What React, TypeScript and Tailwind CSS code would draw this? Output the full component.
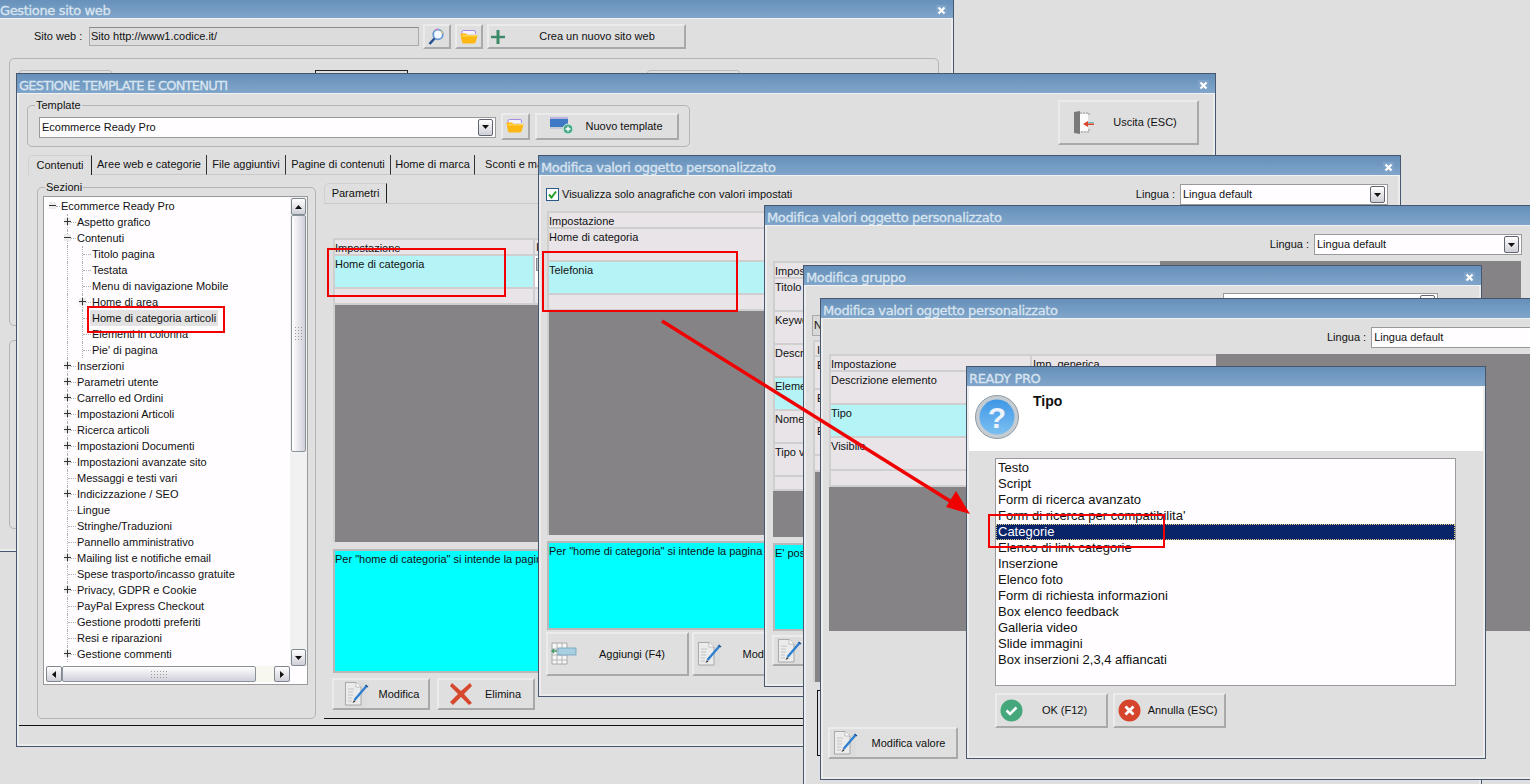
import React from "react";

const FONT = "font-['Liberation_Sans',sans-serif]";

function CloseX() {
  return (
    <svg width="11" height="11" viewBox="0 0 11 11" className="shrink-0">
      <rect width="11" height="11" fill="#7fa3c8" />
      <path d="M2.5 2.5L8.5 8.5M8.5 2.5L2.5 8.5" stroke="#fff" strokeWidth="2.2" />
    </svg>
  );
}

function Win({ className, title, close, children, titleClass }: { className: string; title: string; close?: boolean; children?: React.ReactNode; titleClass?: string }) {
  return (
    <div className={"absolute flex flex-col border border-[#47586e] bg-[#dfdfdf] overflow-hidden " + className}>
      <div className="h-5 shrink-0 flex items-center justify-between bg-gradient-to-b from-[#6690ba] to-[#80a5ca] pl-[2px] pr-[6px] pt-[3px] border-b border-[#f2f2f2]">
        <span className={"text-[#d9e5f0] text-[13px] leading-none whitespace-nowrap font-['DejaVu_Sans',sans-serif] [-webkit-text-stroke:0.3px_#d9e5f0] " + (titleClass || "tracking-[-0.35px]")}>{title}</span>
        {close && <CloseX />}
      </div>
      <div className="flex-1 flex flex-col border-x-2 border-b-2 border-[#ececec] min-h-0">{children}</div>
    </div>
  );
}

function ComboArrow() {
  return (
    <div className="w-[15px] h-[17px] rounded-[2px] border border-[#5f6670] bg-gradient-to-b from-[#ffffff] to-[#cfcfd6] flex items-center justify-center shrink-0">
      <svg width="7" height="4" viewBox="0 0 7 4"><path d="M0 0H7L3.5 4Z" fill="#111" /></svg>
    </div>
  );
}

function Combo({ className, text }: { className: string; text: string }) {
  return (
    <div className={"h-[21px] shrink-0 border border-[#9a9a9a] bg-[#fffdff] flex items-center justify-between pl-[2px] pr-[2px] " + className}>
      <span>{text}</span>
      <ComboArrow />
    </div>
  );
}

function Btn({ className, icon, label, labelClass }: { className: string; icon?: React.ReactNode; label?: string; labelClass?: string }) {
  return (
    <div className={"flex shrink-0 items-center border-2 border-t-[#ebebeb] border-l-[#ebebeb] border-r-[#a9a9a9] border-b-[#a9a9a9] bg-[#dfdfdf] " + className}>
      {icon && <span className="shrink-0 flex items-center">{icon}</span>}
      {label && <span className={"flex-1 text-center whitespace-nowrap " + (labelClass || "")}>{label}</span>}
    </div>
  );
}

function Folder() {
  return (
    <svg width="18" height="14" viewBox="0 0 18 14">
      <path d="M2 4V2Q2 .5 3.500 .5H14Q15.500 .5 15.500 2V4" fill="#f6f2fb" stroke="#a58be0" strokeWidth="1" />
      <path d="M.5 4.500Q.5 3.500 1.500 3.500H6L7.500 5H16.500Q17.500 5 17.500 6L15.500 12.500Q15 13.500 14 13.500H3.500Q2.500 13.500 2 12.500Z" fill="#fdb813" />
      <path d="M1.500 5H17V6.500H2Z" fill="#ffd34d" />
    </svg>
  );
}
function Magnifier() {
  return (
    <svg width="16" height="18" viewBox="0 0 16 18">
      <circle cx="10" cy="6.500" r="4.800" fill="#f4f9ff" stroke="#6b9ad0" strokeWidth="1.800" />
      <path d="M7 1.700a5 5 0 0 1 3-.5" stroke="#d889c8" strokeWidth="1.200" fill="none" />
      <path d="M13 3a5 5 0 0 1 1.500 2.500" stroke="#e2c060" strokeWidth="1.200" fill="none" />
      <path d="M6.500 10.500L1.500 16" stroke="#27508f" strokeWidth="2.600" />
    </svg>
  );
}
function PlusGreen() {
  return (
    <svg width="16" height="16" viewBox="0 0 16 16">
      <path d="M8 1V15" stroke="#3d8a68" strokeWidth="3" />
      <path d="M1 8H15" stroke="#3d8a68" strokeWidth="2.400" />
    </svg>
  );
}
function NewTemplate() {
  return (
    <svg width="24" height="18" viewBox="0 0 24 18">
      <rect x="0" y="0" width="18" height="10" fill="#3f78c4" />
      <rect x="0" y="0" width="18" height="2" fill="#b9b3e0" />
      <rect x="0" y="10" width="18" height="2" fill="#c5cad2" />
      <circle cx="18" cy="12" r="5" fill="#4aa98a" stroke="#d8efe6" />
      <path d="M18 9.500V14.500M15.500 12H20.500" stroke="#fff" strokeWidth="1.400" />
    </svg>
  );
}
function ExitDoor() {
  return (
    <svg width="24" height="24" viewBox="0 0 24 24">
      <path d="M1 1L7 0V23L1 22Z" fill="#7a7a7a" />
      <path d="M7 2H16V5M16 18V21H7" fill="none" stroke="#9a9a9a" strokeWidth="1" strokeDasharray="2 1" />
      <rect x="7" y="3" width="8" height="17" fill="#fbfbfb" />
      <path d="M21 12.500H15V10L10 13L15 16V14H21Z" fill="#d8432b" />
      <path d="M15 11.500H21" stroke="#63c4c8" strokeWidth="1" />
    </svg>
  );
}
function DocPencil() {
  return (
    <svg width="26" height="26" viewBox="0 0 26 26">
      <rect x="0" y="0" width="23" height="26" fill="#dcdcdc" />
      <path d="M1.500 1.500H12L17 6V24H1.500Z" fill="#ebebeb" stroke="#9a9a9a" strokeWidth=".8" />
      <path d="M12 1.500V6H17" fill="#fff" stroke="#9a9a9a" strokeWidth=".6" />
      <path d="M4 8H10M4 11H9M4 14H9M4 17H8M4 20H8" stroke="#c4c4c4" strokeWidth="1" />
      <path d="M22.500 5L10.500 19" stroke="#2f7fd0" strokeWidth="2.400" />
      <path d="M10 19L8.500 22L11.500 20.500Z" fill="#333" />
      <path d="M21.500 4L24 6" stroke="#1f4f90" strokeWidth="1.500" />
    </svg>
  );
}
function TableAdd() {
  return (
    <svg width="26" height="24" viewBox="0 0 26 24">
      <path d="M1 1H16V22H1Z" fill="#f6f6f6" stroke="#9a9a9a" strokeWidth=".8" />
      <path d="M1 7H16M1 13H16M1 18H16M6 1V22M11 1V22" stroke="#a8a8a8" strokeWidth=".8" />
      <rect x="7" y="6" width="18" height="7" fill="#a9cfe2" stroke="#6fa0bb" strokeWidth=".8" />
      <path d="M1 9H6M3 7L1 9L3 11" stroke="#3f9b68" strokeWidth="1.400" fill="none" />
    </svg>
  );
}
function CircleIcon({ color, kind }: { color: string; kind: "ok" | "x" }) {
  return (
    <svg width="23" height="23" viewBox="0 0 23 23">
      <circle cx="11.500" cy="11.500" r="11" fill={color} />
      {kind === "ok" ? (
        <path d="M6.500 11.500L10 15L16.500 8.500" stroke="#fff" strokeWidth="2.600" fill="none" />
      ) : (
        <path d="M7.500 7.500L15.500 15.500M15.500 7.500L7.500 15.500" stroke="#fff" strokeWidth="2.800" />
      )}
    </svg>
  );
}
function BigX() {
  return (
    <svg width="24" height="24" viewBox="0 0 24 24">
      <path d="M3 1L12 9L21 1L23 4L15 12L23 21L20 23L12 15L4 23L1 20L9 12L1 4Z" fill="#d6492f" />
    </svg>
  );
}
function Question() {
  return (
    <svg width="44" height="44" viewBox="0 0 44 44" className="shrink-0">
      <defs>
        <linearGradient id="qb" x1="0" y1="0" x2="0" y2="1">
          <stop offset="0" stopColor="#3f97e6" />
          <stop offset="1" stopColor="#7cc0f2" />
        </linearGradient>
      </defs>
      <circle cx="22" cy="22" r="21.500" fill="#c5cdd3" stroke="#8f9aa3" />
      <circle cx="22" cy="22" r="17.500" fill="url(#qb)" />
      <text x="22" y="33" textAnchor="middle" fontSize="30" fontWeight="700" fill="#eef3fb" fontFamily="Liberation Sans, sans-serif">?</text>
    </svg>
  );
}

function RedRect({ className }: { className: string }) {
  return <div className={"absolute border-2 border-[#f20000] z-50 " + className} />;
}

function Expander({ minus }: { minus?: boolean }) {
  return (
    <span className="relative inline-block w-[7px] h-[7px] bg-[#ececec]">
      <span className="absolute left-0 right-0 top-[3px] h-px bg-[#333]" />
      {!minus && <span className="absolute top-0 bottom-0 left-[3px] w-px bg-[#333]" />}
    </span>
  );
}

type Row = { t: string; lvl: number; exp?: "p" | "m"; hl?: boolean };
const TREE: Row[] = [
  { t: "Ecommerce Ready Pro", lvl: 0, exp: "m" },
  { t: "Aspetto grafico", lvl: 1, exp: "p" },
  { t: "Contenuti", lvl: 1, exp: "m" },
  { t: "Titolo pagina", lvl: 2 },
  { t: "Testata", lvl: 2 },
  { t: "Menu di navigazione Mobile", lvl: 2 },
  { t: "Home di area", lvl: 2, exp: "p" },
  { t: "Home di categoria articoli", lvl: 2, hl: true },
  { t: "Elementi in colonna", lvl: 2 },
  { t: "Pie' di pagina", lvl: 2 },
  { t: "Inserzioni", lvl: 1, exp: "p" },
  { t: "Parametri utente", lvl: 1, exp: "p" },
  { t: "Carrello ed Ordini", lvl: 1, exp: "p" },
  { t: "Impostazioni Articoli", lvl: 1, exp: "p" },
  { t: "Ricerca articoli", lvl: 1, exp: "p" },
  { t: "Impostazioni Documenti", lvl: 1, exp: "p" },
  { t: "Impostazioni avanzate sito", lvl: 1, exp: "p" },
  { t: "Messaggi e testi vari", lvl: 1 },
  { t: "Indicizzazione / SEO", lvl: 1, exp: "p" },
  { t: "Lingue", lvl: 1 },
  { t: "Stringhe/Traduzioni", lvl: 1 },
  { t: "Pannello amministrativo", lvl: 1 },
  { t: "Mailing list e notifiche email", lvl: 1, exp: "p" },
  { t: "Spese trasporto/incasso gratuite", lvl: 1 },
  { t: "Privacy, GDPR e Cookie", lvl: 1, exp: "p" },
  { t: "PayPal Express Checkout", lvl: 1 },
  { t: "Gestione prodotti preferiti", lvl: 1 },
  { t: "Resi e riparazioni", lvl: 1 },
  { t: "Gestione commenti", lvl: 1, exp: "p" },
];

function TreeRow({ r }: { r: Row }) {
  const pad = r.lvl === 0 ? "pl-[17px]" : r.lvl === 1 ? "pl-[33px]" : "pl-[48px]";
  const expPos = r.lvl === 0 ? "left-[5px]" : r.lvl === 1 ? "left-[20px]" : "left-[35px]";
  const stub = r.lvl === 0 ? "left-[12px] w-[4px]" : r.lvl === 1 ? "left-[24px] w-[8px]" : "left-[39px] w-[8px]";
  return (
    <div className={"h-4 relative whitespace-nowrap leading-4 " + pad}>
      {r.lvl >= 1 && <span className="absolute left-[23px] top-0 bottom-0 border-l border-dotted border-[#b0b0b0]" />}
      {r.lvl === 2 && <span className="absolute left-[38px] top-0 bottom-0 border-l border-dotted border-[#b0b0b0]" />}
      <span className={"absolute top-[8px] border-t border-dotted border-[#b0b0b0] " + stub} />
      {r.exp && (
        <span className={"absolute top-[4px] flex " + expPos}>
          <Expander minus={r.exp === "m"} />
        </span>
      )}
      <span className={r.hl ? "relative bg-[#e2e2e2] inline-block px-[2px] -ml-[2px]" : "relative"}>{r.t}</span>
    </div>
  );
}

const scrollBtn = "rounded-[2px] border border-[#7f8890] bg-gradient-to-b from-[#fff] to-[#cfcfd8] flex items-center justify-center shrink-0";

function Tree() {
  return (
    <div className="ml-[5px] mt-[8px] w-[265px] h-[489px] border border-[#9a9a9a] bg-[#fffdff] flex flex-col overflow-hidden">
      <div className="flex flex-1 min-h-0">
        <div className="w-[247px] pt-[1px] overflow-hidden">
          {TREE.map((r) => <TreeRow key={r.t} r={r} />)}
        </div>
        <div className="w-[17px] px-[1px] pt-[1px] bg-[#f1f1f1] flex flex-col">
          <div className={"h-[17px] " + scrollBtn}>
            <svg width="7" height="4" viewBox="0 0 7 4"><path d="M0 4H7L3.500 0Z" fill="#111" /></svg>
          </div>
          <div className="h-[237px] rounded-[2px] border border-[#8a929a] bg-gradient-to-r from-[#fff] to-[#d0d0da] flex items-center justify-center">
            <div className="grid grid-cols-3 gap-[2px]">
              {Array.from({ length: 15 }).map((_, i) => <span key={i} className="w-px h-px bg-[#9a9a9a]" />)}
            </div>
          </div>
          <div className="flex-1" />
          <div className={"h-[17px] " + scrollBtn}>
            <svg width="7" height="4" viewBox="0 0 7 4"><path d="M0 0H7L3.500 4Z" fill="#111" /></svg>
          </div>
        </div>
      </div>
      <div className="h-[16px] mb-[2px] ml-[2px] w-[244px] bg-[#f7f7f0] flex shrink-0">
        <div className={"w-[16px] " + scrollBtn}>
          <svg width="4" height="7" viewBox="0 0 4 7"><path d="M4 0V7L0 3.500Z" fill="#111" /></svg>
        </div>
        <div className="w-[194px] rounded-[2px] border border-[#8a929a] bg-gradient-to-b from-[#fff] to-[#d0d0da] flex items-center justify-center">
          <div className="grid grid-cols-6 gap-[2px]">
            {Array.from({ length: 18 }).map((_, i) => <span key={i} className="w-px h-px bg-[#9a9a9a]" />)}
          </div>
        </div>
        <div className="flex-1" />
        <div className={"w-[16px] " + scrollBtn}>
          <svg width="4" height="7" viewBox="0 0 4 7"><path d="M0 0V7L4 3.500Z" fill="#111" /></svg>
        </div>
      </div>
    </div>
  );
}

function Fieldset({ className, label, children }: { className: string; label?: string; children?: React.ReactNode }) {
  return (
    <div className={"relative shrink-0 border border-[#b4b4b4] rounded-[5px] " + className}>
      {label && <span className="absolute left-[7px] -top-[8px] bg-[#dfdfdf] px-[1px] leading-[14px]">{label}</span>}
      {children}
    </div>
  );
}

function GridRow({ className, cyan, children, cols }: { className: string; cyan?: boolean; children?: React.ReactNode; cols?: React.ReactNode }) {
  return (
    <div className={"border-b-2 border-[#cfcfcf] flex " + (cyan ? "bg-[#b4f4f6] " : "bg-[#e8e4e8] ") + className}>
      <div className="flex-1 leading-[16px] whitespace-nowrap overflow-hidden">{children}</div>
      {cols}
    </div>
  );
}

function TabStrip({ tabs }: { tabs: { t: string; w: string; on?: boolean }[] }) {
  return (
    <div className="flex items-stretch h-[20px]">
      {tabs.map((t) => (
        <div key={t.t} className={"flex items-center justify-center whitespace-nowrap border-r " + t.w + (t.on ? " border-t border-l border-t-[#d0d0d0] border-l-[#d0d0d0] border-r-[#222] rounded-tl-[5px]" : " border-r-[#333] border-b border-b-[#c9c9c9]")}>
          {t.t}
        </div>
      ))}
    </div>
  );
}

function CyanNote({ className, text }: { className: string; text: string }) {
  return <div className={"bg-[#00ffff] border-2 border-[#b8b8b8] leading-[16px] whitespace-nowrap overflow-hidden shrink-0 " + className}>{text}</div>;
}

const LIST = ["Testo", "Script", "Form di ricerca avanzato", "Form di ricerca per compatibilita'", "Categorie", "Elenco di link categorie", "Inserzione", "Elenco foto", "Form di richiesta informazioni", "Box elenco feedback", "Galleria video", "Slide immagini", "Box inserzioni 2,3,4 affiancati"];

export default function App() {
  const col2 = "w-[186px] border-l-2 border-[#cfcfcf] pl-[1px] leading-[16px] whitespace-nowrap";
  return (
    <div className={"relative w-[1530px] h-[784px] overflow-hidden bg-[#dfdfdf] text-[11px] text-[#111] " + FONT}>
      {/* Gestione sito web */}
      <Win className="left-[-3px] top-[-2px] w-[957px] h-[554px] z-[1]" title="Gestione sito web" close>
        <div className="flex items-center pl-[34px] pt-[5px]">
          <span className="w-[55px] shrink-0">Sito web :</span>
          <div className="w-[330px] h-[19px] bg-[#dcdcdc] border border-[#aaa] border-t-[#8a8a8a] leading-[16px] pl-[1px]">Sito http://www1.codice.it/</div>
          <Btn className="ml-[4px] w-[28px] h-[25px]" icon={<span className="pl-[3px]"><Magnifier /></span>} />
          <Btn className="ml-[4px] w-[28px] h-[25px]" icon={<span className="pl-[3px]"><Folder /></span>} />
          <Btn className="ml-[4px] w-[199px] h-[25px]" icon={<span className="pl-[1px]"><PlusGreen /></span>} label="Crea un nuovo sito web" labelClass="pl-[4px]" />
        </div>
        <Fieldset className="ml-[9px] mt-[9px] w-[930px] h-[268px]">
          <div className="flex pt-[11px] pl-[9px]">
            <div className="w-[93px] h-[10px] border border-[#bbb] rounded-t-[3px]" />
            <div className="ml-[203px] w-[93px] h-[10px] border border-[#222]" />
            <div className="ml-[239px] w-[93px] h-[10px] border border-[#bbb] rounded-t-[3px]" />
          </div>
        </Fieldset>
        <Fieldset className="ml-[9px] mt-[14px] w-[930px] h-[189px]" />
      </Win>

      {/* Gestione template */}
      <Win className="left-[16px] top-[73px] w-[1200px] h-[674px] z-[2]" title="GESTIONE TEMPLATE E CONTENUTI" titleClass="tracking-[-0.75px]" close>
        <div className="flex items-start pt-[6px] shrink-0">
          <Fieldset className="ml-[8px] mt-[5px] w-[663px] h-[42px] flex items-center pl-[11px]" label="Template">
            <Combo className="w-[457px] mt-[2px]" text="Ecommerce Ready Pro" />
            <Btn className="ml-[5px] w-[29px] h-[27px]" icon={<span className="pl-[3px]"><Folder /></span>} />
            <Btn className="ml-[5px] w-[144px] h-[27px]" icon={<span className="pl-[13px]"><NewTemplate /></span>} label="Nuovo template" labelClass="pr-[3px]" />
          </Fieldset>
          <Btn className="ml-[368px] w-[141px] h-[45px]" icon={<span className="pl-[13px]"><ExitDoor /></span>} label="Uscita (ESC)" labelClass="pr-[4px]" />
        </div>
        <div className="ml-[9px] mt-[8px] shrink-0">
          <TabStrip tabs={[
            { t: "Contenuti", w: "w-[64px]", on: true },
            { t: "Aree web e categorie", w: "w-[115px]" },
            { t: "File aggiuntivi", w: "w-[79px]" },
            { t: "Pagine di contenuti", w: "w-[105px]" },
            { t: "Home di marca", w: "w-[84px]" },
            { t: "Sconti e margini", w: "w-[100px]" },
          ]} />
        </div>
        <div className="flex mt-[8px] shrink-0">
          <Fieldset className="ml-[18px] mt-[4px] w-[279px] h-[532px]" label="Sezioni">
            <Tree />
          </Fieldset>
          <div className="ml-[8px] w-[880px] h-[536px] border-b border-[#111] shrink-0 flex flex-col">
            <div className="border-b border-[#c9c9c9] h-[21px]">
              <TabStrip tabs={[{ t: "Parametri", w: "w-[63px]", on: true }]} />
            </div>
            <div className="ml-[9px] mt-[34px] w-[220px] h-[304px] bg-[#858385] border-l-2 border-t-2 border-[#cfcfcf] shrink-0">
              <GridRow className="h-[16px]" cols={<div className="w-[20px] border-l-2 border-[#cfcfcf] pl-[1px] leading-[14px]">I</div>}>Impostazione</GridRow>
              <GridRow className="h-[33px]" cyan cols={<div className="w-[20px] border-l-2 border-[#cfcfcf] bg-[#fffdff] pl-[1px]"><span className="block w-[8px] h-[13px] bg-[#b8c8d8] border border-[#888] mt-[2px]" /></div>}>Home di categoria</GridRow>
              <GridRow className="h-[16px]" cols={<div className="w-[20px] border-l-2 border-[#cfcfcf]" />} />
            </div>
            <CyanNote className="ml-[9px] mt-[7px] w-[220px] h-[124px] border-r-0" text={'Per "home di categoria" si intende la pagina in cui'} />
            <div className="flex gap-[7px] ml-[8px] mt-[5px]">
              <Btn className="w-[98px] h-[32px]" icon={<span className="pl-[10px]"><DocPencil /></span>} label="Modifica" />
              <Btn className="w-[98px] h-[32px]" icon={<span className="pl-[10px]"><BigX /></span>} label="Elimina" />
            </div>
          </div>
        </div>
        <div className="mt-[6px] h-px bg-[#111] shrink-0" />
      </Win>

      {/* Modifica valori 1 */}
      <Win className="left-[538px] top-[155px] w-[863px] h-[542px] z-[3]" title="Modifica valori oggetto personalizzato" close>
        <div className="flex items-center pt-[8px] pl-[5px] pr-[10px] shrink-0">
          <span className="w-[13px] h-[13px] border border-[#2b5a8a] bg-white flex items-center justify-center shrink-0">
            <svg width="9" height="9" viewBox="0 0 9 9"><path d="M1 4.500L3.500 7.500L8 1.500" stroke="#23a023" strokeWidth="2" fill="none" /></svg>
          </span>
          <span className="ml-[3px]">Visualizza solo anagrafiche con valori impostati</span>
          <span className="ml-auto mr-[5px]">Lingua :</span>
          <Combo className="w-[208px]" text="Lingua default" />
        </div>
        <div className="ml-[6px] mt-[6px] w-[300px] h-[324px] bg-[#858385] border-l-2 border-t-2 border-[#cfcfcf] shrink-0">
          <GridRow className="h-[16px]">Impostazione</GridRow>
          <GridRow className="h-[33px]">Home di categoria</GridRow>
          <GridRow className="h-[33px]" cyan>Telefonia</GridRow>
          <GridRow className="h-[16px]" />
        </div>
        <CyanNote className="ml-[6px] mt-[6px] w-[300px] h-[89px] border-r-0" text={'Per "home di categoria" si intende la pagina in cui'} />
        <div className="flex gap-[3px] ml-[5px] mt-[2px] shrink-0">
          <Btn className="w-[143px] h-[44px]" icon={<span className="pl-[3px]"><TableAdd /></span>} label="Aggiungi (F4)" />
          <Btn className="w-[143px] h-[44px]" icon={<span className="pl-[3px]"><DocPencil /></span>} label="Modifica" labelClass="pr-[30px]" />
        </div>
      </Win>

      {/* Modifica valori 2 */}
      <Win className="left-[764px] top-[205px] w-[780px] h-[482px] z-[4]" title="Modifica valori oggetto personalizzato">
        <div className="flex items-center justify-end pt-[8px] pr-[19px] shrink-0">
          <span className="mr-[5px]">Lingua :</span>
          <Combo className="w-[208px]" text="Lingua default" />
        </div>
        <div className="ml-[6px] mt-[6px] w-[748px] h-[276px] bg-[#858385] shrink-0">
          <div className="w-[387px] border-l-2 border-t-2 border-[#cfcfcf]">
            <GridRow className="h-[16px]">Impostazione</GridRow>
            <GridRow className="h-[33px]">Titolo</GridRow>
            <GridRow className="h-[33px]">Keywords</GridRow>
            <GridRow className="h-[33px]">Descrizione</GridRow>
            <GridRow className="h-[33px]" cyan>Elemento</GridRow>
            <GridRow className="h-[33px]">Nome</GridRow>
            <GridRow className="h-[33px]">Tipo valore</GridRow>
            <GridRow className="h-[14px]" />
          </div>
        </div>
        <CyanNote className="ml-[6px] mt-[6px] w-[300px] h-[88px] border-r-0" text="E' possibile inserire" />
        <div className="ml-[5px] mt-[4px] shrink-0">
          <Btn className="w-[143px] h-[31px]" icon={<span className="pl-[3px]"><DocPencil /></span>} />
        </div>
      </Win>

      {/* Modifica gruppo */}
      <Win className="left-[803px] top-[265px] w-[679px] h-[540px] z-[5]" title="Modifica gruppo" close>
        <Combo className="ml-[417px] mt-[7px] w-[215px]" text="Lingua default" />
        <div className="ml-[6px] mt-[1px] w-[60px] h-[21px] bg-[#d8d8d8] border border-[#aaa] leading-[18px] pl-[1px] shrink-0">Nome</div>
        <div className="ml-[7px] mt-[4px] w-[14px] border-l-2 border-t-2 border-[#cfcfcf] overflow-hidden shrink-0">
          <GridRow className="h-[15px] pl-[2px]">Impostazione</GridRow>
          <GridRow className="h-[33px] pl-[2px]">Elemento</GridRow>
          <GridRow className="h-[33px] pl-[2px]">Elemento</GridRow>
          <GridRow className="h-[33px] pl-[2px]">Elemento</GridRow>
          <GridRow className="h-[16px]" />
          <div className="h-[210px] bg-[#858385]" />
        </div>
        <div className="ml-[11px] mt-[8px] w-[12px] h-[66px] border border-[#111] shrink-0" />
      </Win>

      {/* Modifica valori 3 */}
      <Win className="left-[820px] top-[298px] w-[760px] h-[482px] z-[6]" title="Modifica valori oggetto personalizzato">
        <div className="flex items-center pt-[8px] pl-[504px] shrink-0">
          <span className="mr-[5px] whitespace-nowrap shrink-0">Lingua :</span>
          <Combo className="w-[260px]" text="Lingua default" />
        </div>
        <div className="ml-[6px] mt-[6px] w-[741px] h-[277px] bg-[#858385] shrink-0">
          <div className="w-[387px] border-l-2 border-t-2 border-[#cfcfcf]">
            <GridRow className="h-[16px]" cols={<div className={col2}>Imp. generica</div>}>Impostazione</GridRow>
            <GridRow className="h-[33px]" cols={<div className={col2} />}>Descrizione elemento</GridRow>
            <GridRow className="h-[33px]" cyan cols={<div className={col2} />}>Tipo</GridRow>
            <GridRow className="h-[33px]" cols={<div className={col2} />}>Visibile</GridRow>
            <GridRow className="h-[16px]" cols={<div className={col2} />} />
          </div>
        </div>
        <div className="ml-[5px] mt-[96px] shrink-0">
          <Btn className="w-[130px] h-[32px]" icon={<span className="pl-[3px]"><DocPencil /></span>} label="Modifica valore" labelClass="pl-[2px]" />
        </div>
      </Win>

      {/* Dialog READY PRO */}
      <Win className="left-[966px] top-[366px] w-[520px] h-[393px] z-[7]" title="READY PRO">
        <div className="h-[64px] bg-white flex items-start pl-[6px] pt-[8px] gap-[14px] shrink-0">
          <Question />
          <span className="text-[14px] font-bold leading-4 -mt-[2px]">Tipo</span>
        </div>
        <div className="ml-[26px] mt-[7px] w-[461px] h-[228px] border border-[#9a9a9a] bg-[#fffdff] pt-[1px] text-[13px] shrink-0">
          {LIST.map((t, i) => (
            <div key={t} className={"h-4 leading-4 pl-[2px] " + (i === 4 ? "bg-[#0a246a] text-white outline-1 outline-dotted outline-[#e8d080] -outline-offset-1" : "")}>{t}</div>
          ))}
        </div>
        <div className="flex gap-[5px] ml-[26px] mt-[7px] shrink-0">
          <Btn className="w-[113px] h-[35px]" icon={<span className="pl-[3px]"><CircleIcon color="#45a77c" kind="ok" /></span>} label="OK (F12)" />
          <Btn className="w-[113px] h-[35px]" icon={<span className="pl-[3px]"><CircleIcon color="#d6442c" kind="x" /></span>} label="Annulla (ESC)" />
        </div>
      </Win>

      <RedRect className="left-[87px] top-[306px] w-[138px] h-[27px]" />
      <RedRect className="left-[327px] top-[248px] w-[179px] h-[49px]" />
      <RedRect className="left-[542px] top-[251px] w-[196px] h-[61px]" />
      <RedRect className="left-[988px] top-[514px] w-[177px] h-[34px]" />

      <svg className="absolute left-0 top-0 z-50 pointer-events-none" width="1530" height="784">
        <path d="M662 321L950 501" stroke="#f00000" strokeWidth="3.500" />
        <path d="M970 514L946 507L956 491Z" fill="#f00000" />
      </svg>
    </div>
  );
}
